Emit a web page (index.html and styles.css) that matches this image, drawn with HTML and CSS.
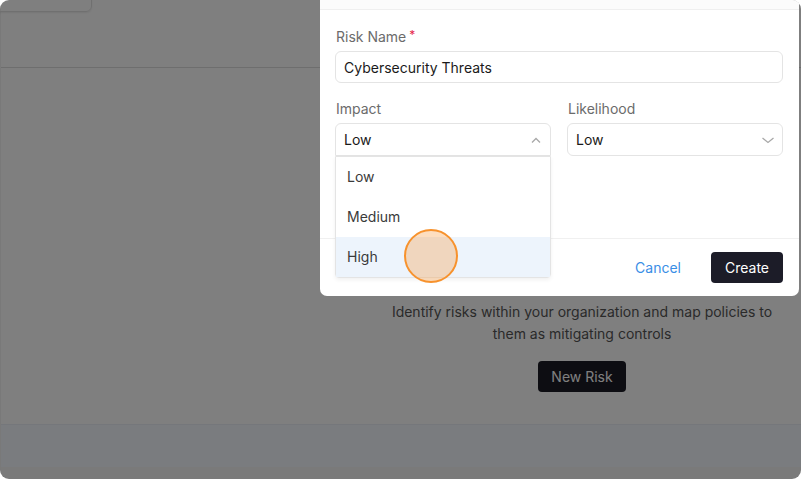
FILE: index.html
```html
<!DOCTYPE html>
<html lang="en">
  <head>
    <meta charset="UTF-8" />
    <meta name="viewport" content="width=device-width, initial-scale=1.0" />
    <title>Risks</title>
    <link rel="stylesheet" href="styles.css">
  </head>
  <body>
    <div class="screen">
      <div class="app">
        <div class="topbar">
          <div class="top-button"></div>
        </div>
        <div class="main">
          <div class="empty-state">
            <p>Identify risks within your organization and map policies to<br />them as mitigating controls</p>
            <button class="btn-dark new-risk">New Risk</button>
          </div>
        </div>
        <div class="band"></div>
        <div class="band-bottom"></div>
      </div>

      <div class="overlay"></div>

      <div class="modal">
        <div class="modal-header"></div>
        <form class="modal-body">
          <div class="form-group">
            <label for="riskName">Risk Name<span class="required">*</span></label>
            <input type="text" id="riskName" value="Cybersecurity Threats" />
          </div>
          <div class="form-row">
            <div class="form-group">
              <label>Impact</label>
              <div class="select open">
                <span>Low</span>
                <svg class="chevron" width="14" height="14" viewBox="0 0 14 14"><path d="M3 9.5 7 5.5l4 4" /></svg>
                <ul class="options">
                  <li>Low</li>
                  <li>Medium</li>
                  <li class="active">High</li>
                </ul>
              </div>
            </div>
            <div class="form-group">
              <label>Likelihood</label>
              <div class="select">
                <span>Low</span>
                <svg class="chevron" width="14" height="14" viewBox="0 0 14 14"><path d="M1.5 5 7 9.5 12.5 5" /></svg>
              </div>
            </div>
          </div>
        </form>
        <div class="modal-footer">
          <button class="btn-link">Cancel</button>
          <button class="btn-dark">Create</button>
        </div>
      </div>

      <div class="click-dot"></div>
    </div>
  </body>
</html>
```

FILE: styles.css
```css
body {
  margin: 0;
  padding: 0;
  background: #fff;
  font-family: Inter, "Noto Sans", sans-serif;
}
.screen {
  position: relative;
  width: 801px;
  height: 479px;
  border-radius: 9px;
  overflow: hidden;
}
.app {
  display: flex;
  flex-direction: column;
  height: 100%;
  background: #fff;
  border-left: 1px solid #f2f2f2;
  box-sizing: border-box;
}
.topbar {
  height: 68px;
  border-bottom: 1px solid #dcdcdc;
  box-sizing: border-box;
}
.top-button {
  width: 101px;
  height: 32px;
  margin: -20px 0 0 -10px;
  border: 1px solid #e0e0e0;
  border-radius: 6px;
  box-shadow: 0 1px 2px rgba(0, 0, 0, 0.08);
  box-sizing: border-box;
}
.main {
  flex: 1;
  padding: 233px 0 0 362px;
}
.empty-state {
  text-align: center;
}
.empty-state p {
  margin: 0 0 16px;
  font-size: 14px;
  line-height: 22px;
  color: #555;
}
.btn-dark {
  border: none;
  border-radius: 4px;
  background: #1c1c28;
  color: #fff;
  font-family: inherit;
  font-size: 14px;
  height: 31px;
  padding: 0 14px;
  cursor: pointer;
}
.new-risk {
  background: #1a1a24;
  padding: 0 13px;
}
.band {
  height: 42px;
  border-top: 1px solid #eaeef6;
  background: #f4f8ff;
}
.band-bottom {
  height: 12px;
  background: #f4f4f4;
}
.overlay {
  position: absolute;
  inset: 0;
  background: rgba(0, 0, 0, 0.5);
}
.modal {
  position: absolute;
  left: 320px;
  top: 0;
  width: 479px;
  height: 296px;
  background: #fff;
  border-radius: 0 0 7px 7px;
}
.modal-header {
  height: 9px;
  background: #fbfbfb;
  border-bottom: 1px solid #efefef;
}
.modal-body {
  padding: 15px 16px 82px 15px;
}
.form-group {
  margin-bottom: 16px;
}
.form-row {
  display: flex;
  gap: 16px;
}
.form-row .form-group {
  flex: 1;
  margin-bottom: 0;
}
label {
  display: block;
  font-size: 14px;
  line-height: 20px;
  color: #6b6b6b;
  margin: 0 0 4px 1px;
}
.required {
  color: #e5254a;
  margin-left: 3px;
  font-size: 12px;
  vertical-align: 3px;
}
input[type='text'] {
  width: 100%;
  height: 32px;
  padding: 0 8px;
  border: 1px solid #e4e4e4;
  border-radius: 6px;
  box-sizing: border-box;
  font-family: inherit;
  font-size: 14px;
  color: #1a1a1a;
}
.select {
  position: relative;
  display: flex;
  align-items: center;
  justify-content: space-between;
  height: 33px;
  padding: 0 7px 0 8px;
  border: 1px solid #e4e4e4;
  border-radius: 6px;
  box-sizing: border-box;
  font-size: 14px;
  color: #1a1a1a;
}
.select.open {
  border-radius: 6px 6px 0 0;
}
.chevron {
  fill: none;
  stroke: #a8a8a8;
  stroke-width: 1.3;
}
.options {
  position: absolute;
  left: -1px;
  right: -1px;
  top: 32px;
  margin: 0;
  padding: 0;
  list-style: none;
  background: #fff;
  border: 1px solid #e4e4e4;
  border-radius: 0 0 4px 4px;
  box-shadow: 0 2px 4px rgba(0, 0, 0, 0.06);
  z-index: 2;
}
.options li {
  height: 40px;
  line-height: 40px;
  padding: 0 11px;
  color: #3a3a3a;
}
.options li.active {
  background: #edf4fc;
}
.modal-footer {
  display: flex;
  justify-content: flex-end;
  align-items: center;
  gap: 18px;
  height: 57px;
  padding: 0 16px;
  border-top: 1px solid #f0f0f0;
}
.btn-link {
  border: none;
  background: none;
  color: #3a8ee6;
  font-family: inherit;
  font-size: 14px;
  padding: 0 12px;
  cursor: pointer;
}
.click-dot {
  position: absolute;
  z-index: 5;
  left: 404px;
  top: 229px;
  width: 54px;
  height: 54px;
  border: 2px solid #f7922d;
  border-radius: 50%;
  background: rgba(247, 146, 45, 0.3);
  box-sizing: border-box;
}
```
